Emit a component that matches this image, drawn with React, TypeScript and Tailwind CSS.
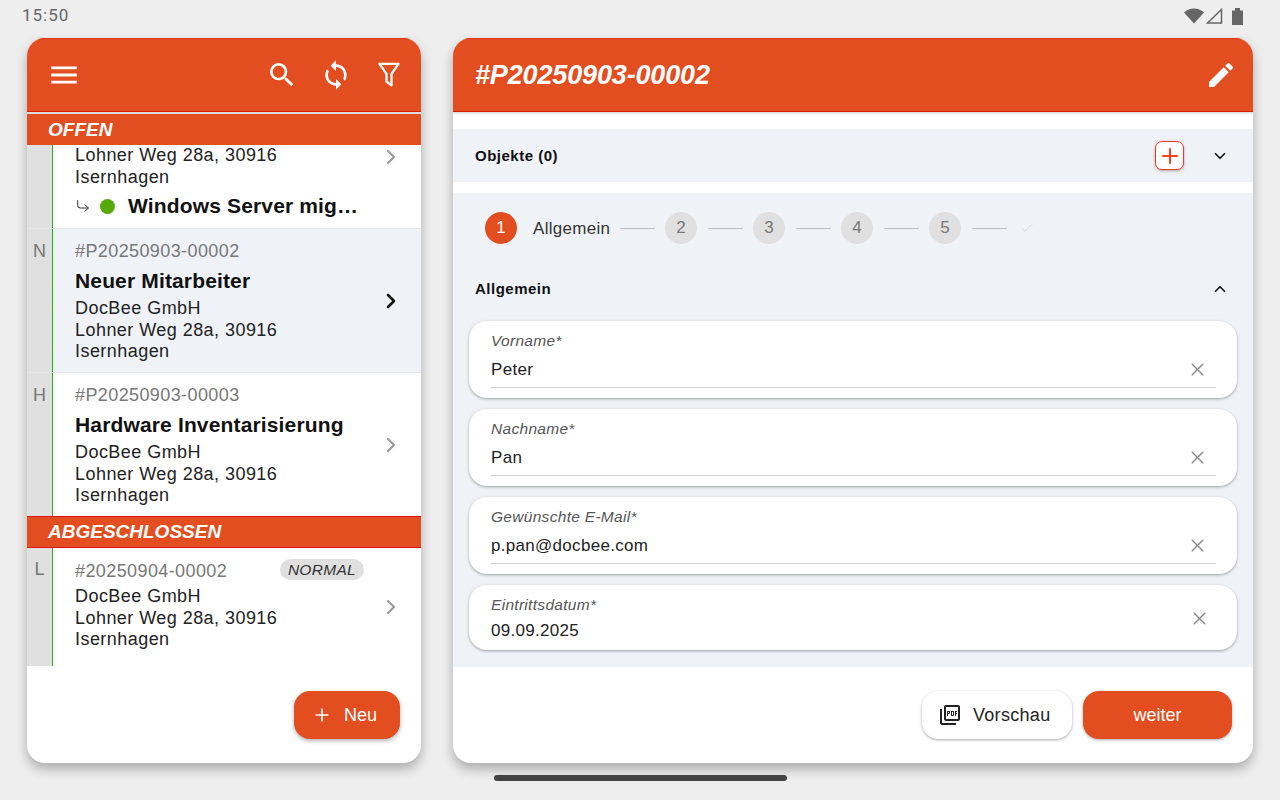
import { ChevronRight, ChevronDown, ChevronUp, Plus, X, Check, CornerDownRight } from "lucide-react";
import { MdEdit, MdMenu, MdOutlinePictureAsPdf, MdSearch, MdSync } from "react-icons/md";

const ORANGE = "bg-[#e24e1f]";

function Chevron({ dark }: { dark?: boolean }) {
  return (
    <ChevronRight
      size={24}
      strokeWidth={dark ? 2.6 : 2.2}
      className={dark ? "text-[#111] shrink-0" : "text-[#9a9a9a] shrink-0"}
    />
  );
}

function Address({ short }: { short?: boolean }) {
  return (
    <div className="text-[18px] leading-[21.5px] tracking-[0.45px] text-[#222]">
      {!short && <div>DocBee GmbH</div>}
      <div>Lohner Weg 28a, 30916</div>
      <div>Isernhagen</div>
    </div>
  );
}

function Ticket({ letter, id, title, active, last }: { letter: string; id: string; title: string; active?: boolean; last?: boolean }) {
  return (
    <div className={`flex shrink-0 ${last ? "h-[143px]" : "h-[144px] border-b border-[#e6e6e6]"} ${active ? "bg-[#eff3f8]" : "bg-white"}`}>
      <div className="w-[25px] bg-[#e0e0e0] text-center text-[18px] leading-[21px] text-[#777] pt-[12px]">{letter}</div>
      <div className="w-[1px] bg-[#1cc000]" />
      <div className="flex-1 pl-[22px] pr-[18px] flex items-center">
        <div className="flex-1 self-start pt-[12px]">
          <div className="text-[18px] leading-[21px] tracking-[0.4px] text-[#777]">{id}</div>
          <div className="mt-[4px] mb-[2px] text-[21px] leading-[30px] font-bold tracking-[0.15px] text-[#111]">{title}</div>
          <Address />
        </div>
        <Chevron dark={active} />
      </div>
    </div>
  );
}

function SectionBar({ label, redTop }: { label: string; redTop?: boolean }) {
  return (
    <div className={`shrink-0 ${ORANGE} pl-[21px] flex items-center text-white italic font-bold text-[19px] ${redTop ? "h-[32px] border-t border-b border-[#e00f00]" : "h-[31px] pt-[1px]"}`}>
      {label}
    </div>
  );
}

function Field({ label, value, short }: { label: string; value: string; short?: boolean }) {
  if (short) {
    return (
      <div className="bg-white rounded-[18px] shadow-[0_1px_3px_rgba(0,0,0,0.35)] pl-[22px] pr-[27px] h-[65px] pt-[2px] flex items-center">
        <div className="flex-1">
          <div className="text-[15.5px] leading-[19px] italic tracking-[0.3px] text-[#555]">{label}</div>
          <div className="text-[17px] leading-[24px] tracking-[0.3px] text-[#222] mt-[5px]">{value}</div>
        </div>
        <X size={21} strokeWidth={1.6} className="text-[#8a8a8a] -mt-[1px]" />
      </div>
    );
  }
  return (
    <div className="bg-white rounded-[18px] shadow-[0_1px_3px_rgba(0,0,0,0.35)] pl-[22px] pr-[21px] h-[77px]">
      <div className="pt-[10px] text-[15.5px] leading-[19px] italic tracking-[0.3px] text-[#555]">{label}</div>
      <div className="flex items-center mt-[4px] h-[34px] pb-[2px] border-b border-[#cfcfcf]">
        <div className="flex-1 text-[17px] tracking-[0.3px] text-[#222]">{value}</div>
        <X size={21} strokeWidth={1.6} className="text-[#8a8a8a] mr-[8px]" />
      </div>
    </div>
  );
}

function Step({ n }: { n: number }) {
  return (
    <div className="w-[32px] h-[32px] rounded-full bg-[#e0e0e0] flex items-center justify-center text-[17px] text-[#777]">{n}</div>
  );
}

function Line() {
  return <div className="w-[35px] h-[1px] bg-[#bdbdbd] ml-[11px] mr-[10px]" />;
}

export default function App() {
  return (
    <div className="w-[1280px] h-[800px] bg-[#eeeeee] overflow-hidden flex flex-col font-['Liberation_Sans',Arial,sans-serif]">
      {/* status bar */}
      <div className="h-[38px] pl-[22px] pr-[37px] pb-[6px] flex items-center justify-between">
        <span className="font-['Roboto',sans-serif] text-[17px] tracking-[1px] text-[#666]">15:50</span>
        <div className="flex items-center">
          <svg width="20" height="16" viewBox="0 0 20 16"><path d="M0 4.500C2.800 1.800 6.200.6 10 .6s7.200 1.200 10 3.900L10 15.500z" fill="#666" /></svg>
          <svg width="17" height="16" viewBox="0 0 17 16" className="ml-[2px]"><path d="M1.500 15L15.500 1.500V15z" fill="none" stroke="#666" strokeWidth="1.500" /></svg>
          <svg width="11" height="17" viewBox="0 0 11 17" className="ml-[9px]"><path d="M0 2.500h3V0h5v2.500h3V17H0z" fill="#666" /></svg>
        </div>
      </div>

      <div className="flex-1 flex pl-[27px] pr-[27px] gap-[32px] items-start">
        {/* left panel */}
        <div className="w-[394px] h-[725px] bg-white rounded-[18px] overflow-hidden shadow-[0_6px_12px_rgba(0,0,0,0.28)] flex flex-col">
          <div className={`h-[74px] ${ORANGE} border-t border-b border-[#e3330f] border-b-[#dd1c00] flex items-center pl-[20px] pr-[21px] shrink-0 text-white`}>
            <MdMenu size={34} />
            <div className="flex-1" />
            <MdSearch size={32} className="mr-[22px]" />
            <MdSync size={32} className="mr-[26px]" />
            <svg width="22" height="26" viewBox="0 0 22 26" fill="none">
              <path d="M1.500 1.800h19l-7 10v11.500l-5-3.800v-7.700z" stroke="#fff" strokeWidth="2.300" strokeLinejoin="round" />
            </svg>
          </div>
          <div className="h-[2px] bg-[#dcdcdc] shrink-0" />
          <SectionBar label="OFFEN" />

          {/* first row, scrolled under the section bar */}
          <div className="flex h-[84px] bg-white border-b border-[#e6e6e6] shrink-0">
            <div className="w-[25px] bg-[#e0e0e0]" />
            <div className="w-[1px] bg-[#1cc000]" />
            <div className="flex-1 pl-[22px] pr-[18px]">
              <div className="flex justify-between">
                <Address short />
                <Chevron />
              </div>
              <div className="flex items-center mt-[4px]">
                <CornerDownRight size={16} strokeWidth={1.5} className="text-[#333]" />
                <span className="w-[15px] h-[15px] rounded-full bg-[#57a80a] ml-[9px]" />
                <span className="ml-[13px] text-[21px] leading-[28px] font-bold tracking-[0.15px] text-[#111]">Windows Server mig…</span>
              </div>
            </div>
          </div>

          <Ticket letter="N" id="#P20250903-00002" title="Neuer Mitarbeiter" active />
          <Ticket letter="H" id="#P20250903-00003" title="Hardware Inventarisierung" last />

          <SectionBar label="ABGESCHLOSSEN" redTop />

          <div className="flex h-[118px] bg-white shrink-0">
            <div className="w-[25px] bg-[#e0e0e0] text-center text-[18px] leading-[21px] text-[#777] pt-[11px]">L</div>
            <div className="w-[1px] bg-[#1cc000]" />
            <div className="flex-1 pl-[22px] pr-[18px] flex items-center">
              <div className="flex-1 self-start">
                <div className="flex items-center pt-[8px] pr-[15px] justify-between h-[38px]">
                  <span className="text-[18px] tracking-[0.4px] text-[#777]">#20250904-00002</span>
                  <span className="h-[21px] px-[8px] -mt-[3px] rounded-full bg-[#e0e0e0] italic text-[15.5px] leading-[21px] tracking-[0.3px] text-[#333]">NORMAL</span>
                </div>
                <Address />
              </div>
              <Chevron />
            </div>
          </div>

          <div className="flex-1 flex justify-end items-start pr-[21px] pt-[25px]">
            <button className={`w-[106px] h-[48px] ${ORANGE} rounded-[16px] shadow-[0_2px_4px_rgba(0,0,0,0.3)] text-white flex items-center pl-[18px] text-[18px]`}>
              <Plus size={20} strokeWidth={2} />
              <span className="ml-[12px]">Neu</span>
            </button>
          </div>
        </div>

        {/* right panel */}
        <div className="w-[800px] h-[725px] bg-white rounded-[18px] overflow-hidden shadow-[0_6px_12px_rgba(0,0,0,0.28)] flex flex-col">
          <div className={`h-[74px] ${ORANGE} border-t border-b border-[#e3330f] border-b-[#dd1c00] shadow-[0_1px_3px_rgba(0,0,0,0.2)] flex items-center justify-between pl-[22px] pr-[16px] shrink-0`}>
            <span className="text-white italic font-bold text-[27px] tracking-[-0.15px]">#P20250903-00002</span>
            <MdEdit size={32} className="text-white" />
          </div>

          <div className="mt-[17px] h-[53px] bg-[#eff3f8] flex items-center pl-[22px] pr-[24px] shrink-0">
            <span className="flex-1 pt-[1px] text-[15px] font-bold tracking-[0.5px] text-[#111]">Objekte (0)</span>
            <div className="w-[29px] h-[29px] rounded-[7px] bg-white border border-[#f03a20] shadow-[0_1px_3px_rgba(0,0,0,0.3)] flex items-center justify-center mr-[27px]">
              <Plus size={24} strokeWidth={2} className="text-[#f0401c]" />
            </div>
            <ChevronDown size={18} strokeWidth={2.2} className="text-[#111]" />
          </div>

          <div className="mt-[11px] flex-1 bg-[#eff3f8] flex flex-col pl-[16px] pr-[16px] min-h-0">
            <div className="h-[70px] flex items-center pl-[16px] shrink-0">
              <div className={`w-[32px] h-[32px] rounded-full ${ORANGE} flex items-center justify-center text-[17px] text-white`}>1</div>
              <span className="ml-[16px] mr-[11px] w-[76px] pt-[1px] text-[17px] tracking-[0.3px] text-[#333] whitespace-nowrap">Allgemein</span>
              <div className="w-[35px] h-[1px] bg-[#bdbdbd] mr-[10px]" />
              <Step n={2} />
              <Line />
              <Step n={3} />
              <Line />
              <Step n={4} />
              <Line />
              <Step n={5} />
              <Line />
              <Check size={16} strokeWidth={1.2} className="text-[#cfcfcf] ml-[2px]" />
            </div>

            <div className="h-[52px] flex items-center pl-[6px] pr-[8px] shrink-0">
              <span className="flex-1 text-[15px] font-bold tracking-[0.5px] text-[#111]">Allgemein</span>
              <ChevronUp size={18} strokeWidth={2.2} className="text-[#111]" />
            </div>

            <div className="flex flex-col gap-[11px] mt-[6px]">
              <Field label="Vorname*" value="Peter" />
              <Field label="Nachname*" value="Pan" />
              <Field label="Gewünschte E-Mail*" value="p.pan@docbee.com" />
              <Field label="Eintrittsdatum*" value="09.09.2025" short />
            </div>
          </div>

          <div className="h-[96px] shrink-0 flex justify-end pt-[24px] pr-[21px] gap-[11px]">
            <button className="w-[150px] h-[48px] bg-white rounded-[16px] shadow-[0_1px_3px_rgba(0,0,0,0.35)] flex items-center pl-[16px] text-[18px] tracking-[0.3px] text-[#222]">
              <MdOutlinePictureAsPdf size={24} className="text-[#222]" />
              <span className="ml-[11px]">Vorschau</span>
            </button>
            <button className={`w-[149px] h-[48px] ${ORANGE} rounded-[16px] shadow-[0_1px_3px_rgba(0,0,0,0.35)] text-white text-[18px]`}>weiter</button>
          </div>
        </div>
      </div>

      {/* home indicator */}
      <div className="h-[37px] flex justify-center pt-[12px]">
        <div className="w-[293px] h-[6px] rounded-full bg-[#444]" />
      </div>
    </div>
  );
}
